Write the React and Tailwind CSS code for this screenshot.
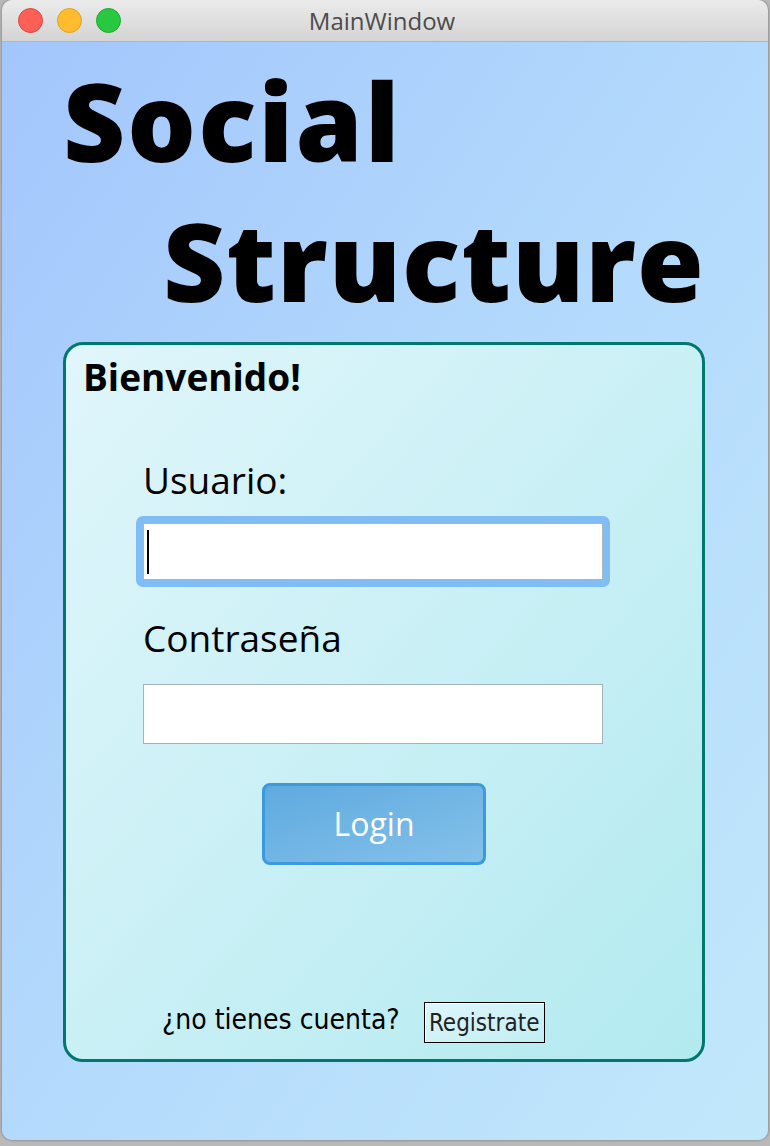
import React from "react";

export default function App() {
  const sans = { fontFamily: '"Open Sans", "Liberation Sans", sans-serif' };
  const dv = { fontFamily: '"DejaVu Sans Condensed", "DejaVu Sans", sans-serif' };
  return (
    <div className="w-[770px] h-[1146px] bg-[#b9b9b9] relative overflow-hidden">
      <div className="absolute left-[2px] top-0 w-[766px] h-[1140px] rounded-[10px] overflow-hidden flex flex-col shadow-[0_0_3px_rgba(0,0,0,0.4)]">
        {/* title bar */}
        <div className="h-[42px] shrink-0 bg-gradient-to-b from-[#ebebeb] to-[#d4d4d4] border-b border-[#b4b4b4] relative flex items-center justify-center">
          <div className="absolute left-[16px] top-[8px] flex gap-[14px]">
            <div className="w-[25px] h-[25px] rounded-full bg-[#fe5f57] border border-[#e0443e]" />
            <div className="w-[25px] h-[25px] rounded-full bg-[#febc2e] border border-[#dea123]" />
            <div className="w-[25px] h-[25px] rounded-full bg-[#28c840] border border-[#1aab29]" />
          </div>
          <span className="text-[24px] text-[#4c4c4c] ml-[-6px]" style={sans}>MainWindow</span>
        </div>
        {/* body */}
        <div className="flex-1 bg-gradient-to-br from-[#a3c6fc] via-[#b3dafc] to-[#c2e8fb] flex flex-col" style={sans}>
          <div className="pl-[61px] pt-[9px] font-extrabold text-black leading-[140px] text-[108px] tracking-[1px]">
            <div className="h-[140px] tracking-[2px]">Social</div>
            <div className="h-[140px] pl-[100px]">Structure</div>
          </div>
          <div className="ml-[61px] mt-[11px] w-[642px] h-[720px] rounded-[20px] border-[3px] border-[#00786c] bg-gradient-to-br from-[#e0f6fb] to-[#b2eaf0] flex flex-col">
            <div className="pl-[17px] pt-[10px] text-[37px] font-bold leading-[44px] text-black">Bienvenido!</div>
            <div className="pl-[77px] pt-[59px] text-[37px] leading-[44px] text-black">Usuario:</div>
            <div className="ml-[70px] mt-[14px] w-[474px] h-[71px] rounded-[7px] bg-[#80bdf5] p-[7px]">
              <div className="w-full h-full bg-white border border-[#a9b9b9] relative">
                <div className="absolute left-[3px] top-[6px] w-[2px] h-[44px] bg-black" />
              </div>
            </div>
            <div className="pl-[77px] pt-[29px] text-[37px] leading-[44px] text-black">Contraseña</div>
            <div className="ml-[77px] mt-[24px] w-[460px] h-[60px] bg-white border border-[#a4b4b4]" />
            <div className="ml-[196px] mt-[39px] w-[224px] h-[82px] rounded-[8px] border-[3px] border-[#3a9add] bg-gradient-to-br from-[#5eaadf] to-[#84c1ea] flex items-center justify-center text-white text-[32px] leading-[40px]">
              Login
            </div>
            <div className="flex-1" />
            <div className="flex items-center pl-[96px] pb-[16px]">
              <span className="text-[28px] text-black leading-[30px] mt-[-6px]" style={dv}>¿no tienes cuenta?</span>
              <div className="ml-[24px] w-[121px] h-[41px] border border-black shadow-[inset_1px_1px_0_#fff] bg-gradient-to-br from-[#def6fb] to-[#c2eef4] flex items-center justify-center text-[24px] text-[#222]" style={dv}>
                Registrate
              </div>
            </div>
          </div>
        </div>
      </div>
    </div>
  );
}
